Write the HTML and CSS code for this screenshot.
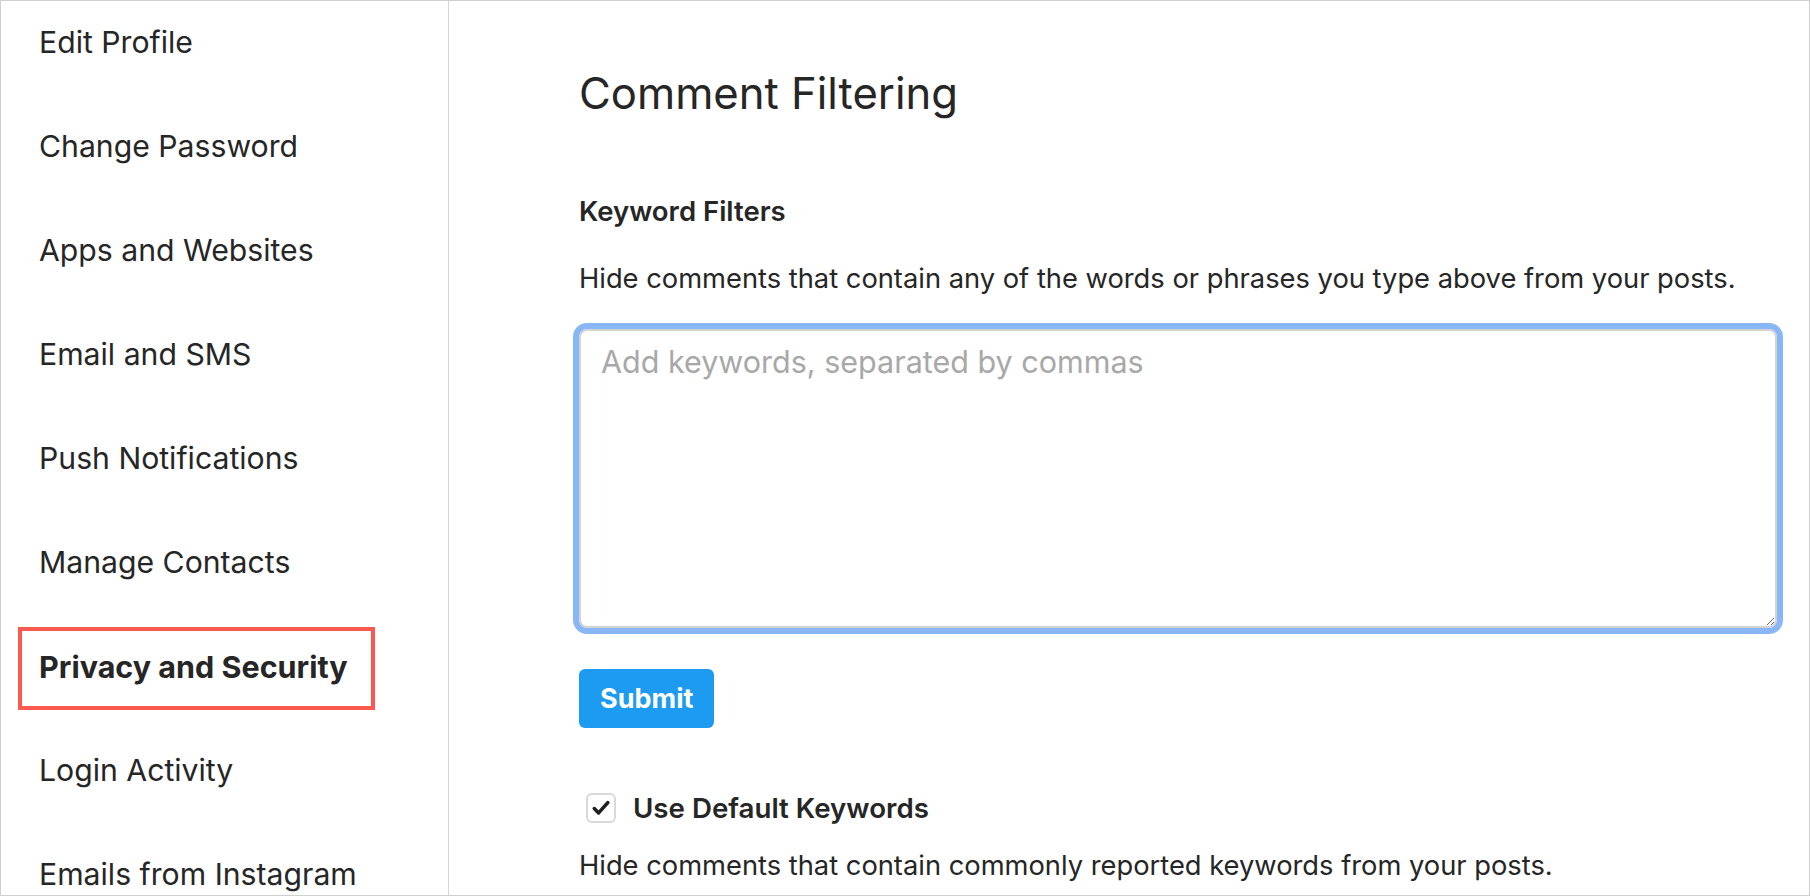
FILE: index.html
```html
<!DOCTYPE html>
<html lang="en">
<head>
<meta charset="utf-8">
<title>Comment Filtering</title>
<link rel="stylesheet" href="styles.css">
</head>
<body>
<div class="page">
  <nav class="sidebar">
    <a class="nav-item">Edit Profile</a>
    <a class="nav-item">Change Password</a>
    <a class="nav-item">Apps and Websites</a>
    <a class="nav-item">Email and SMS</a>
    <a class="nav-item">Push Notifications</a>
    <a class="nav-item">Manage Contacts</a>
    <a class="nav-item nav-item--active">Privacy and Security</a>
    <a class="nav-item">Login Activity</a>
    <a class="nav-item">Emails from Instagram</a>
  </nav>
  <main class="content">
    <h1 class="title">Comment Filtering</h1>
    <h2 class="section-title">Keyword Filters</h2>
    <p class="desc">Hide comments that contain any of the words or phrases you type above from your posts.</p>
    <textarea class="keywords" placeholder="Add keywords, separated by commas"></textarea>
    <button class="submit" type="button">Submit</button>
    <label class="check-row">
      <span class="checkbox">
        <svg viewBox="0 0 30 30" width="30" height="30"><path d="M8.3 15.6 L12.6 19.9 L21.8 9.6" fill="none" stroke="#1f1f1f" stroke-width="3.6" stroke-linecap="round" stroke-linejoin="round"/></svg>
      </span>
      <span class="check-label">Use Default Keywords</span>
    </label>
    <p class="desc desc--last">Hide comments that contain commonly reported keywords from your posts.</p>
  </main>
</div>
</body>
</html>
```
FILE: styles.css
```css
* { box-sizing: border-box; }

html, body {
  margin: 0;
  padding: 0;
  background: #ffffff;
}

body {
  font-family: Inter, "Noto Sans", "Liberation Sans", sans-serif;
  color: #262626;
}

.page {
  display: flex;
  width: 1810px;
  height: 896px;
  border: 1px solid #cfcfcf;
  overflow: hidden;
}

.sidebar {
  flex: 0 0 448px;
  border-right: 1px solid #d6d6d6;
  display: flex;
  flex-direction: column;
  gap: 29px;
  padding: 6px 0 0 21px;
}

.nav-item {
  display: block;
  flex: 0 0 75px;
  width: 349px;
  height: 75px;
  line-height: 71px;
  padding-left: 17px;
  font-size: 30.2px;
  font-weight: 400;
  color: #262626;
  white-space: nowrap;
}

.nav-item--active {
  font-weight: 700;
  font-size: 30.5px;
  outline: 4px solid #fa5a50;
}

.content {
  flex: 1;
  padding: 68px 32px 0 130px;
  display: flex;
  flex-direction: column;
  align-items: flex-start;
}

.title {
  margin: 0;
  font-size: 43.6px;
  line-height: 50px;
  font-weight: 400;
  color: #262626;
}

.section-title {
  margin: 76px 0 0;
  font-size: 27.5px;
  line-height: 32px;
  font-weight: 600;
}

.desc {
  margin: 36px 0 0;
  font-size: 27.3px;
  line-height: 32px;
  font-weight: 400;
}

.keywords {
  display: block;
  margin-top: 34px;
  width: 100%;
  height: 299px;
  border: 2px solid #d3d3d3;
  border-radius: 8px;
  outline: 6px solid #89b6f7;
  outline-offset: 0;
  padding: 13px 20px;
  font-family: Inter, "Noto Sans", "Liberation Sans", sans-serif;
  font-size: 30.5px;
  line-height: 36px;
  color: #262626;
  resize: both;
}

.keywords::placeholder {
  color: #a8a8a8;
}

.submit {
  margin-top: 41px;
  height: 59px;
  padding: 0 21px;
  border: 0;
  border-radius: 6px;
  background: #1d9bf0;
  color: #ffffff;
  font-family: Inter, "Noto Sans", "Liberation Sans", sans-serif;
  font-size: 27px;
  font-weight: 700;
}

.check-row {
  margin-top: 65px;
  margin-left: 7px;
  display: flex;
  align-items: center;
  gap: 17px;
}

.checkbox {
  display: block;
  width: 30px;
  height: 30px;
  border: 2px solid #d9d9d9;
  border-radius: 6px;
  background: #fff;
}

.checkbox svg {
  display: block;
  margin: -2px;
}

.check-label {
  font-size: 27.7px;
  line-height: 30px;
  font-weight: 600;
}

.desc--last {
  margin-top: 27px;
}
```
